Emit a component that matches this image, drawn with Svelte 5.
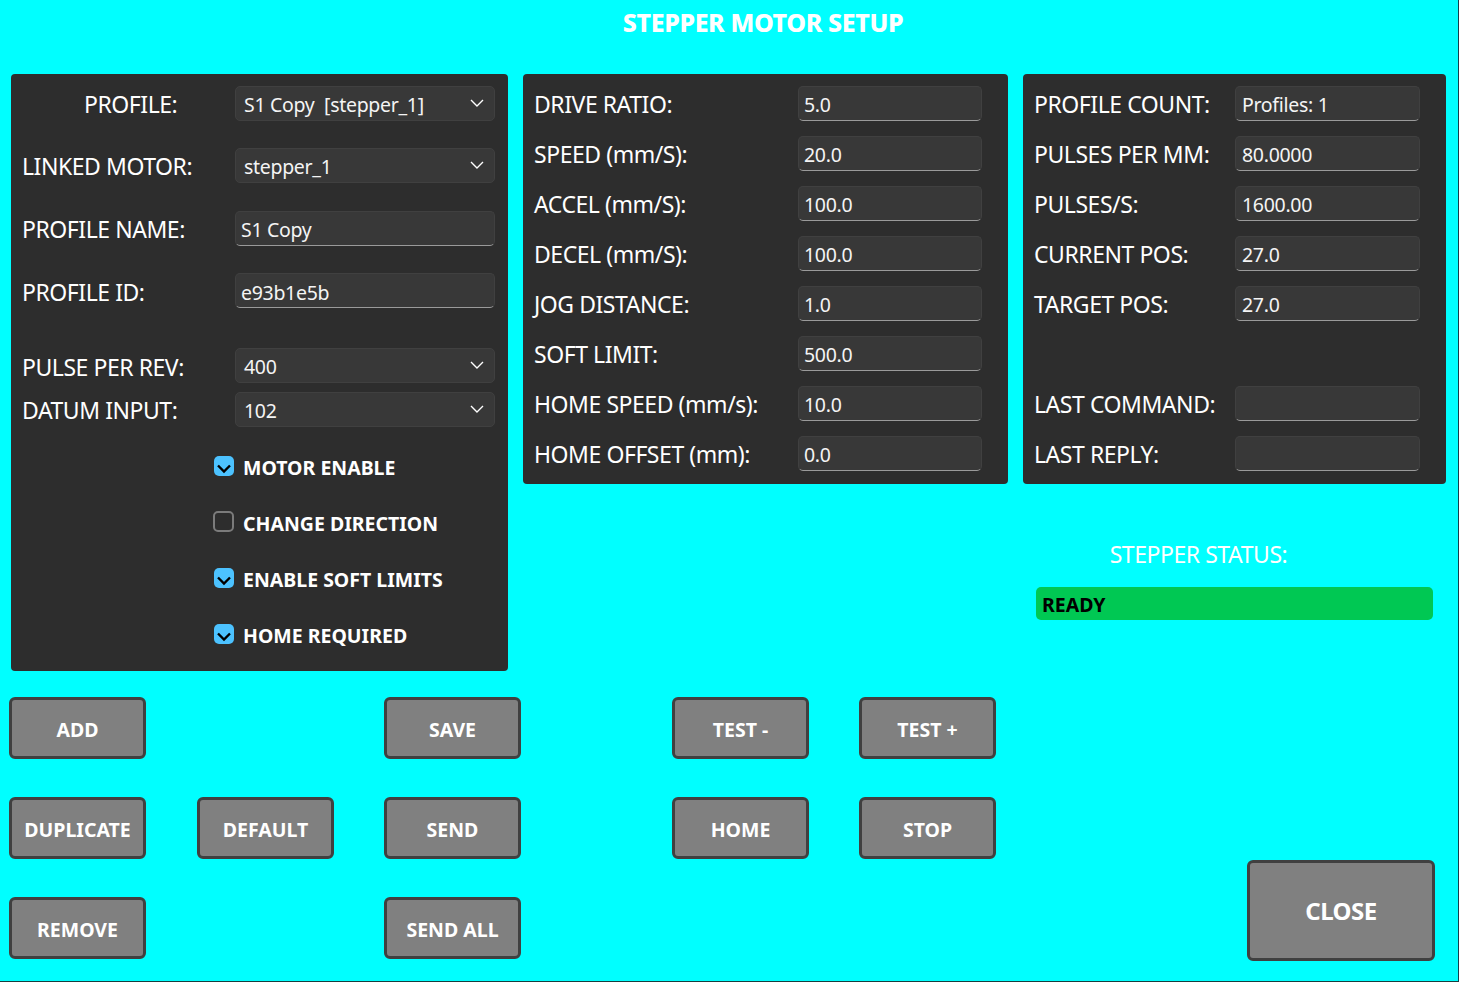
<script lang="ts">
type Field = { label: string; value?: string; gap?: boolean };

const drive: Field[] = [
  { label: "DRIVE RATIO:", value: "5.0" },
  { label: "SPEED (mm/S):", value: "20.0" },
  { label: "ACCEL (mm/S):", value: "100.0" },
  { label: "DECEL (mm/S):", value: "100.0" },
  { label: "JOG DISTANCE:", value: "1.0" },
  { label: "SOFT LIMIT:", value: "500.0" },
  { label: "HOME SPEED (mm/s):", value: "10.0" },
  { label: "HOME OFFSET (mm):", value: "0.0" },
];

const info: Field[] = [
  { label: "PROFILE COUNT:", value: "Profiles: 1" },
  { label: "PULSES PER MM:", value: "80.0000" },
  { label: "PULSES/S:", value: "1600.00" },
  { label: "CURRENT POS:", value: "27.0" },
  { label: "TARGET POS:", value: "27.0" },
  { label: "", gap: true },
  { label: "LAST COMMAND:", value: "" },
  { label: "LAST REPLY:", value: "" },
];

const checks = [
  { label: "MOTOR ENABLE", on: true },
  { label: "CHANGE DIRECTION", on: false },
  { label: "ENABLE SOFT LIMITS", on: true },
  { label: "HOME REQUIRED", on: true },
];

const buttons = [
  "ADD", "", "SAVE", "TEST -", "TEST +",
  "DUPLICATE", "DEFAULT", "SEND", "HOME", "STOP",
  "REMOVE", "", "SEND ALL", "", "",
];
</script>

{#snippet chevron()}
  <svg class="chevron" width="14" height="8" viewBox="0 0 14 8" aria-hidden="true">
    <path d="M1 1l6 6 6-6" fill="none" stroke="#fff" stroke-width="1.4" />
  </svg>
{/snippet}

{#snippet select(value: string)}
  <div class="select"><span>{value}</span>{@render chevron()}</div>
{/snippet}

<div class="page">
  <h1>STEPPER MOTOR SETUP</h1>

  <div class="top">
    <section class="panel profile">
      <div class="row">
        <span class="label label-center">PROFILE:</span>
        {@render select("S1 Copy  [stepper_1]")}
      </div>
      <div class="row row-linked">
        <span class="label">LINKED MOTOR:</span>
        {@render select("stepper_1")}
      </div>
      <div class="row">
        <span class="label">PROFILE NAME:</span>
        <div class="input wide">S1 Copy</div>
      </div>
      <div class="row row-id">
        <span class="label">PROFILE ID:</span>
        <div class="input wide">e93b1e5b</div>
      </div>
      <div class="row row-pulse">
        <span class="label">PULSE PER REV:</span>
        {@render select("400")}
      </div>
      <div class="row row-datum">
        <span class="label">DATUM INPUT:</span>
        {@render select("102")}
      </div>
      <div class="checks">
        {#each checks as c}
          <div class="check">
            <span class="box" class:on={c.on}>
              {#if c.on}
                <svg width="20" height="20" viewBox="0 0 20 20" aria-hidden="true">
                  <path d="M4 9.500l6 6 6-6" fill="none" stroke="#000" stroke-width="2.4" />
                </svg>
              {/if}
            </span>
            <span>{c.label}</span>
          </div>
        {/each}
      </div>
    </section>

    <section class="panel fields drive">
      {#each drive as f}
        <div class="field">
          <span class="label">{f.label}</span>
          <div class="input">{f.value}</div>
        </div>
      {/each}
    </section>

    <div class="side">
      <section class="panel fields info">
        {#each info as f}
          <div class="field">
            {#if !f.gap}
              <span class="label">{f.label}</span>
              <div class="input">{f.value}</div>
            {/if}
          </div>
        {/each}
      </section>
      <div class="status-title">STEPPER STATUS:</div>
      <div class="status-bar">READY</div>
    </div>
  </div>

  <div class="bottom">
    <div class="buttons">
      {#each buttons as b}
        {#if b}
          <button class="btn">{b}</button>
        {:else}
          <span></span>
        {/if}
      {/each}
    </div>
    <button class="btn close">CLOSE</button>
  </div>
</div>

<style>
  :global(body) {
    margin: 0;
    background: #00ffff;
  }

  .page {
    box-sizing: border-box;
    width: 1459px;
    height: 982px;
    overflow: hidden;
    background: #00ffff;
    border-right: 1px solid #0f3f4c;
    border-bottom: 1px solid #173f3f;
    color: #fff;
    font-family: "Noto Sans", "Open Sans", sans-serif;
  }

  h1 {
    margin: 0;
    width: 1526px;
    height: 74px;
    padding-top: 7px;
    box-sizing: border-box;
    text-align: center;
    font-size: 25px;
    line-height: 30px;
    font-weight: 800;
    letter-spacing: -0.4px;
  }

  .top {
    display: flex;
    align-items: flex-start;
    gap: 15px;
    padding-left: 11px;
  }

  .panel {
    box-sizing: border-box;
    background: #2d2d2d;
    border-radius: 4px;
  }

  .label {
    font-size: 23px;
    line-height: 36px;
    letter-spacing: -0.45px;
    white-space: nowrap;
  }

  .profile {
    width: 497px;
    height: 597px;
    padding: 12px 13px 0 11px;
  }

  .row {
    display: flex;
    justify-content: space-between;
    height: 35px;
    margin-bottom: 27px;
  }

  .row-linked {
    margin-bottom: 28px;
  }

  .row-id .label,
  .row-id .input,
  .row-pulse .label {
    line-height: 38px;
  }

  .row-pulse {
    margin-top: 40px;
    margin-bottom: 9px;
  }

  .row-datum {
    margin-bottom: 0;
  }

  .label-center {
    padding-left: 62px;
  }

  .select,
  .input {
    box-sizing: border-box;
    height: 35px;
    background: #383838;
    border: 1px solid #404040;
    border-radius: 5px;
    font-size: 19.5px;
    line-height: 36px;
    letter-spacing: -0.3px;
    color: #f4f4f4;
    white-space: pre;
  }

  .select {
    display: flex;
    align-items: center;
    justify-content: space-between;
    width: 260px;
    padding: 0 10px 0 8px;
  }

  .select span {
    margin-top: 3px;
  }

  .input {
    width: 184px;
    padding-left: 5px;
    border-bottom: 1px solid #9a9a9a;
  }

  .input.wide {
    width: 260px;
  }

  .info .input {
    width: 185px;
    padding-left: 6px;
  }

  .chevron {
    margin-top: -2px;
  }

  .checks {
    display: flex;
    flex-direction: column;
    gap: 28px;
    margin: 26px 0 0 191px;
  }

  .check {
    display: flex;
    align-items: center;
    gap: 9px;
    height: 28px;
    font-size: 19.5px;
    font-weight: 700;
  }

  .box {
    box-sizing: border-box;
    display: flex;
    align-items: center;
    justify-content: center;
    width: 21px;
    height: 21px;
    margin-top: -3px;
    border: 2px solid #7b7b7b;
    border-radius: 5px;
  }

  .box.on {
    width: 20px;
    height: 20px;
    margin: -3px 0.5px 0;
    background: #4cc2ff;
    border: 0;
  }

  .fields {
    display: flex;
    flex-direction: column;
    gap: 15px;
    height: 410px;
    padding: 12px 26px 0 11px;
  }

  .field {
    display: flex;
    justify-content: space-between;
    height: 35px;
  }

  .drive {
    width: 485px;
  }

  .info {
    width: 423px;
  }

  .status-title {
    box-sizing: border-box;
    width: 423px;
    margin-top: 54px;
    padding-right: 72px;
    text-align: center;
    font-size: 23px;
    line-height: 32px;
    letter-spacing: -0.45px;
  }

  .status-bar {
    box-sizing: border-box;
    width: 397px;
    height: 33px;
    margin: 17px 0 0 13px;
    padding-left: 6px;
    background: #00c853;
    border-radius: 5px;
    color: #000;
    font-size: 19.5px;
    font-weight: 700;
    line-height: 36px;
  }

  .bottom {
    position: relative;
    padding: 26px 0 0 9px;
  }

  .buttons {
    display: grid;
    grid-template-columns: 138px 137px 137px 137px 137px;
    grid-auto-rows: 62px;
    column-gap: 50px;
    row-gap: 38px;
    width: 987px;
  }

  .buttons > :nth-child(5n + 4),
  .buttons > :nth-child(5n) {
    margin-left: 101px;
  }

  .btn {
    box-sizing: border-box;
    width: 137px;
    height: 62px;
    padding: 2px 0 0;
    background: #808080;
    border: 3px solid #404040;
    border-radius: 6px;
    color: #fff;
    font-family: inherit;
    font-size: 19.5px;
    font-weight: 700;
  }

  .close {
    position: absolute;
    left: 1247px;
    top: 189px;
    width: 188px;
    height: 101px;
    padding: 0;
    font-size: 24px;
    letter-spacing: -0.5px;
  }
</style>
